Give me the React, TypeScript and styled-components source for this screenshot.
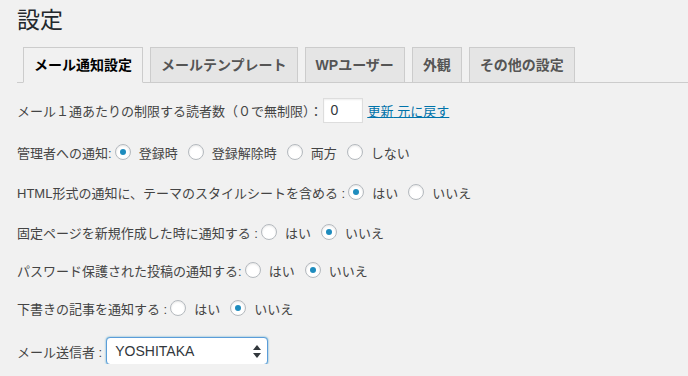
import { createGlobalStyle } from "styled-components";
import styled from "styled-components";

const GlobalStyle=createGlobalStyle`
    body{
        margin: 0;
        background: #f1f1f1;
        font-family: "Liberation Sans", "Noto Sans CJK JP", sans-serif;
        color: #444;
    }
`;

const Wrap=styled.div`
    padding: 0 0 0 17px;
`;

const Title=styled.h1`
    margin: 0;
    padding-top: 6px;
    font-size: 23px;
    font-weight: 400;
    line-height: 29px;
    color: #23282d;
`;

const TabBar=styled.nav`
    display: flex;
    align-items: flex-end;
    gap: 7px;
    margin-top: 12px;
    padding-left: 6px;
    border-bottom: 1px solid #ccc;
`;

const Tab=styled.span<{ $active?: boolean }>`
    padding: 5px 10px;
    font-size: 14px;
    font-weight: 700;
    line-height: 24px;
    white-space: nowrap;
    border: 1px solid #ccc;
    border-bottom: ${(p)=>p.$active ? "1px solid #f1f1f1" : "none"};
    margin-bottom: ${(p)=>p.$active ? "-1px" : "0"};
    background: ${(p)=>p.$active ? "#f1f1f1" : "#e5e5e5"};
    color: ${(p)=>p.$active ? "#000" : "#555"};
`;

const Row=styled.div<{ $mt: number }>`
    display: flex;
    align-items: center;
    height: 26px;
    margin-top: ${(p)=>p.$mt}px;
    font-size: 13px;
    white-space: nowrap;
`;

const NumInput=styled.div`
    box-sizing: border-box;
    width: 40px;
    height: 25px;
    padding: 0 7px;
    display: flex;
    align-items: center;
    background: #fff;
    border: 1px solid #ddd;
    box-shadow: inset 0 1px 2px rgba(0,0,0,.07);
    font-size: 14px;
    color: #32373c;
`;

const Links=styled.span`
    margin-left: 5px;
    color: #0073aa;
    text-decoration: underline;
    a{
        color: #0073aa;
    }
`;

const Radio=styled.span<{ $checked?: boolean }>`
    box-sizing: border-box;
    width: 16px;
    height: 16px;
    margin: 0 8px 0 3px;
    border-radius: 50%;
    border: 1px solid #b4b9be;
    background: #fff;
    box-shadow: inset 0 1px 2px rgba(0,0,0,.1);
    display: flex;
    align-items: center;
    justify-content: center;
    flex-shrink: 0;
    &::before{
        content: "";
        display: ${(p)=>p.$checked ? "block" : "none"};
        width: 6px;
        height: 6px;
        border-radius: 50%;
        background: #1e8cbe;
    }
`;

const Option=styled.label`
    display: flex;
    align-items: center;
    margin-right: 7px;
`;

const Select=styled.div`
    box-sizing: border-box;
    width: 162px;
    height: 28px;
    margin-left: 4px;
    padding: 0 6px 0 8px;
    display: flex;
    align-items: center;
    justify-content: space-between;
    background: #fff;
    border: 1px solid #5b9dd9;
    border-radius: 4px;
    box-shadow: 0 0 2px rgba(30,140,190,.8);
    font-size: 14px;
    color: #32373c;
`;

interface IChoice{
    label: string,
    checked?: boolean,
}

function Choices({ items }: { items: IChoice[] }){
    return (
        <>
            {items.map((c)=>(
                <Option key={c.label}>
                    <Radio $checked={c.checked} />
                    {c.label}
                </Option>
            ))}
        </>
    );
}

const tabs=["メール通知設定", "メールテンプレート", "WPユーザー", "外観", "その他の設定"];

function App(){
    return (
    <Wrap>
        <GlobalStyle />
        <Title>設定</Title>
        <TabBar>
            {tabs.map((t, i)=>(
                <Tab key={t} $active={i===0}>{t}</Tab>
            ))}
        </TabBar>
        <Row $mt={14}>
            メール１通あたりの制限する読者数（０で無制限）：
            <NumInput>0</NumInput>
            <Links><a href="#">更新</a> <a href="#">元に戻す</a></Links>
        </Row>
        <Row $mt={16}>
            管理者への通知:
            <Choices items={[{ label: "登録時", checked: true }, { label: "登録解除時" }, { label: "両方" }, { label: "しない" }]} />
        </Row>
        <Row $mt={14}>
            HTML形式の通知に、テーマのスタイルシートを含める :
            <Choices items={[{ label: "はい", checked: true }, { label: "いいえ" }]} />
        </Row>
        <Row $mt={14}>
            固定ページを新規作成した時に通知する :
            <Choices items={[{ label: "はい" }, { label: "いいえ", checked: true }]} />
        </Row>
        <Row $mt={12}>
            パスワード保護された投稿の通知する:
            <Choices items={[{ label: "はい" }, { label: "いいえ", checked: true }]} />
        </Row>
        <Row $mt={12}>
            下書きの記事を通知する :
            <Choices items={[{ label: "はい" }, { label: "いいえ", checked: true }]} />
        </Row>
        <Row $mt={17}>
            メール送信者 :
            <Select>
                YOSHITAKA
                <svg width="8" height="13" viewBox="0 0 8 13">
                    <path d="M4 0 L8 5 L0 5 Z" fill="#32373c" />
                    <path d="M0 8 L8 8 L4 13 Z" fill="#32373c" />
                </svg>
            </Select>
        </Row>
    </Wrap>
    );
}

export default App;
